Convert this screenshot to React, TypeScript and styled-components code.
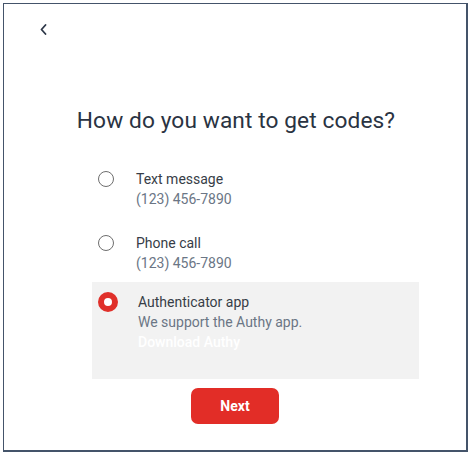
import styled, { createGlobalStyle, css } from 'styled-components';

const GlobalStyle = createGlobalStyle`
  html, body {
    margin: 0;
    padding: 0;
    background: #ffffff;
  }
  body {
    font-family: Roboto, "Liberation Sans", Arial, sans-serif;
    -webkit-font-smoothing: antialiased;
  }
`;

const Card = styled.div`
  box-sizing: border-box;
  margin: 3px 0 0 3px;
  width: 465px;
  height: 449px;
  border: 1px solid #44546a;
  border-right-width: 2px;
  border-bottom-width: 2px;
  background: #ffffff;
  display: flex;
  flex-direction: column;
  align-items: center;
`;

const TopBar = styled.div`
  align-self: stretch;
  display: flex;
  padding: 18px 0 0 33px;
  height: 20px;
`;

const BackButton = styled.button`
  border: 0;
  background: none;
  padding: 0;
  width: 12px;
  height: 14px;
  display: flex;
  align-items: center;
  justify-content: center;
  color: #2d3748;
  cursor: pointer;
`;

const Heading = styled.h1`
  margin: 65px 0 0;
  font-size: 22.7px;
  line-height: 28px;
  font-weight: 400;
  color: #2a3342;
  letter-spacing: 0.1px;
  transform: translateX(1px);
`;

const OptionList = styled.div`
  align-self: flex-start;
  margin: 24px 0 0 88px;
  width: 327px;
  display: flex;
  flex-direction: column;
`;

const Option = styled.label<{ $selected?: boolean }>`
  display: flex;
  align-items: flex-start;
  padding: ${({ $selected }) => ($selected ? '10px 6px 27px' : '10px 6px 9px')};
  background: ${({ $selected }) => ($selected ? '#f2f2f2' : 'transparent')};
  cursor: pointer;

  ${({ $selected }) =>
    !$selected &&
    css`
      &:not(:first-child) {
        margin-top: 5px;
      }
    `}
`;

const Radio = styled.span<{ $checked?: boolean }>`
  box-sizing: border-box;
  flex: none;
  width: ${({ $checked }) => ($checked ? '20px' : '16px')};
  height: ${({ $checked }) => ($checked ? '20px' : '16px')};
  margin-top: ${({ $checked }) => ($checked ? '0' : '2px')};
  margin-right: ${({ $checked }) => ($checked ? '20px' : '22px')};
  border-radius: 50%;
  border: ${({ $checked }) => ($checked ? '6px solid #e0302a' : '1.5px solid #6e6e6e')};
  background: #ffffff;
`;

const OptionText = styled.div`
  display: flex;
  flex-direction: column;
  font-size: 14px;
  line-height: 20px;
`;

const OptionTitle = styled.span`
  color: #373d47;
`;

const OptionDetail = styled.span`
  color: #6b7685;
`;

const DownloadLink = styled.a`
  color: #ffffff;
  font-weight: 500;
  text-decoration: none;
`;

const NextButton = styled.button`
  margin-top: 9px;
  width: 88px;
  height: 36px;
  border: 0;
  border-radius: 7px;
  background: #e22d27;
  color: #ffffff;
  font-family: inherit;
  font-size: 14px;
  font-weight: 700;
  cursor: pointer;
`;

const options = [
  { id: 'sms', title: 'Text message', detail: '(123) 456-7890' },
  { id: 'call', title: 'Phone call', detail: '(123) 456-7890' },
];

const App = () => {
  return (
    <>
      <GlobalStyle />
      <Card>
        <TopBar>
          <BackButton aria-label="Back">
            <svg width="7" height="11" viewBox="0 0 7 11" fill="none">
              <path d="M5.5 1 L1.5 5.5 L5.5 10" stroke="currentColor" strokeWidth="1.8" strokeLinecap="round" strokeLinejoin="round" />
            </svg>
          </BackButton>
        </TopBar>
        <Heading>How do you want to get codes?</Heading>
        <OptionList>
          {options.map((o) => (
            <Option key={o.id}>
              <Radio />
              <OptionText>
                <OptionTitle>{o.title}</OptionTitle>
                <OptionDetail>{o.detail}</OptionDetail>
              </OptionText>
            </Option>
          ))}
          <Option $selected>
            <Radio $checked />
            <OptionText>
              <OptionTitle>Authenticator app</OptionTitle>
              <OptionDetail>We support the Authy app.</OptionDetail>
              <DownloadLink href="#">Download Authy</DownloadLink>
            </OptionText>
          </Option>
        </OptionList>
        <NextButton>Next</NextButton>
      </Card>
    </>
  );
};

export default App;
